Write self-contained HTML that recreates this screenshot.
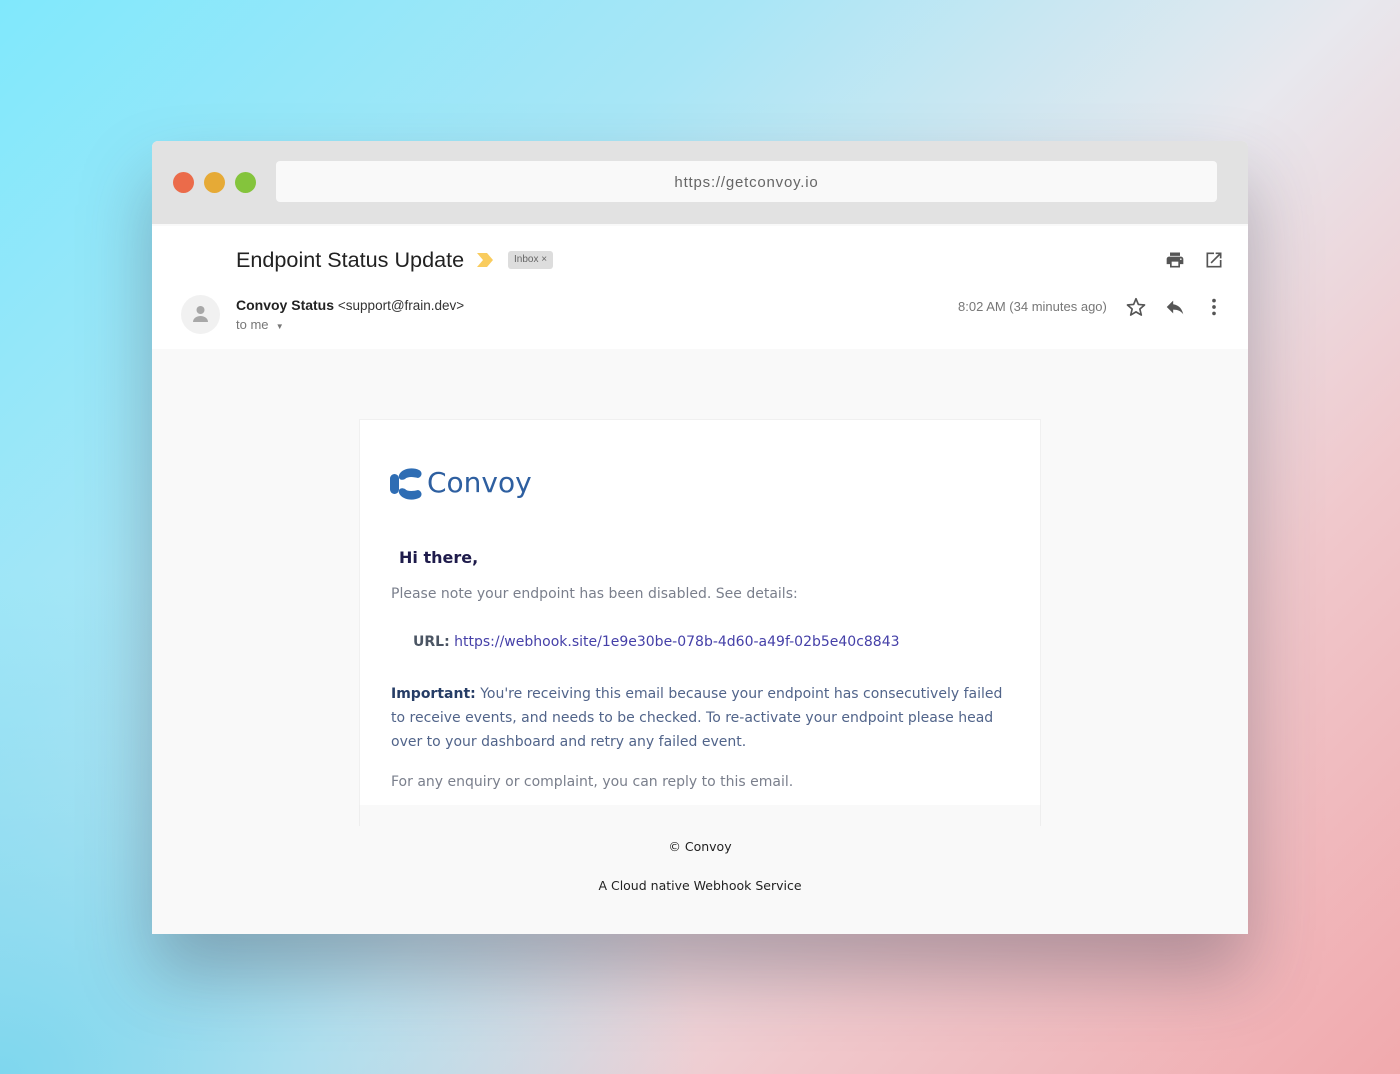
<!DOCTYPE html>
<html><head><meta charset="utf-8"><style>
*{margin:0;padding:0;box-sizing:border-box}
body{width:1400px;height:1074px;overflow:hidden;position:relative;font-family:"Liberation Sans",sans-serif;
background:radial-gradient(ellipse 700px 500px at 0% 100%,rgba(122,214,238,.95),rgba(122,214,238,0) 100%),linear-gradient(135deg,#80e8fc 0%,#a8e6f6 30%,#e8e8ee 55%,#f0c8cc 75%,#f1a9ad 100%);}
.win{position:absolute;left:152px;top:141px;width:1096px;height:793px;background:#f9f9f9;border-radius:6px 6px 0 0;overflow:hidden;box-shadow:0 40px 70px rgba(60,60,80,.35)}
.tb{position:absolute;left:0;top:0;width:1096px;height:83px;background:#e2e2e2}
.dot{position:absolute;top:31px;width:21px;height:21px;border-radius:50%}
.url{position:absolute;left:124px;top:20px;width:941px;height:41px;background:#f9f9f9;border-radius:4px;text-align:center;line-height:43px;font-size:15px;color:#666;letter-spacing:.8px}
.hdr{position:absolute;left:0;top:85px;width:1096px;height:123px;background:#fff}
.t{position:absolute;white-space:nowrap}
.card{position:absolute;left:207px;top:278px;width:682px;height:386px;background:#fff;border:1px solid #f0f0f0;border-bottom:none}
.cb{position:absolute;left:207px;top:664px;width:682px;height:21px;border-left:1px solid #eee;border-right:1px solid #eee}
.q{font-family:"DejaVu Sans","Liberation Sans",sans-serif}
</style></head><body>
<div class="win">
 <div class="tb">
  <div class="dot" style="left:21px;background:#eb6b4a"></div>
  <div class="dot" style="left:52px;background:#e6aa36"></div>
  <div class="dot" style="left:83px;background:#84c43c"></div>
  <div class="url">https://getconvoy.io</div>
 </div>
 <div class="hdr">
  <div class="t" style="left:84px;top:21px;font-size:21.6px;color:#222">Endpoint Status Update</div>
  <svg class="t" style="left:324px;top:26px" width="18" height="16" viewBox="0 0 18 16"><path d="M1 1h10l6 7-6 7H1l6-7z" fill="#f9cc5e"/></svg>
  <div class="t" style="left:356px;top:25px;height:18px;padding:0 6px;background:#ddd;border-radius:3px;font-size:10px;line-height:18px;color:#666">Inbox ×</div>
  <div class="t" style="left:29px;top:69px;width:39px;height:39px;border-radius:50%;background:#f1f1f1"></div>
  <svg class="t" style="left:39px;top:78px" width="19" height="20" viewBox="0 0 19 20"><circle cx="9.5" cy="6" r="4" fill="#a8a8a8"/><path d="M2 18c0-4 4-6 7.5-6s7.5 2 7.5 6z" fill="#a8a8a8"/></svg>
  <div class="t" style="left:84px;top:71px;font-size:14px;color:#222"><b>Convoy Status</b> <span style="font-size:13.5px;color:#333">&lt;support@frain.dev&gt;</span></div>
  <div class="t" style="left:84px;top:91px;font-size:13px;color:#777">to me &nbsp;<span style="font-size:8px">▼</span></div>
  <div class="t" style="left:806px;top:73px;font-size:13px;color:#777">8:02 AM (34 minutes ago)</div>
  <svg class="t" style="left:1013px;top:24px" width="20" height="20" viewBox="0 0 24 24"><path d="M19 8H5c-1.7 0-3 1.3-3 3v6h4v4h12v-4h4v-6c0-1.7-1.3-3-3-3zm-3 11H8v-5h8v5zm3-7a1 1 0 110-2 1 1 0 010 2zM18 3H6v4h12z" fill="#555"/></svg>
  <svg class="t" style="left:1052px;top:24px" width="20" height="20" viewBox="0 0 24 24"><path d="M19 19H5V5h7V3H3v18h18v-9h-2zM14 3v2h3.6l-9.8 9.8 1.4 1.4L19 6.4V10h2V3z" fill="#555"/></svg>
  <svg class="t" style="left:973px;top:70px" width="22" height="22" viewBox="0 0 24 24"><path d="M12 3l2.6 6.2 6.7.6-5.1 4.4 1.6 6.6L12 17.3l-5.8 3.5 1.6-6.6-5.1-4.4 6.7-.6z" fill="none" stroke="#555" stroke-width="1.8" stroke-linejoin="round"/></svg>
  <svg class="t" style="left:1012px;top:70px" width="22" height="22" viewBox="0 0 24 24"><path d="M10 9V5l-7 7 7 7v-4.1c5 0 8.5 1.6 11 5.1-1-5-4-10-11-11z" fill="#555"/></svg>
  <svg class="t" style="left:1051px;top:70px" width="22" height="22" viewBox="0 0 24 24"><circle cx="12" cy="5" r="2" fill="#555"/><circle cx="12" cy="12" r="2" fill="#555"/><circle cx="12" cy="19" r="2" fill="#555"/></svg>
 </div>
 <div class="card">
  <svg class="t" style="left:30px;top:47px" width="34" height="34" viewBox="0 0 34 34"><rect x="0" y="7" width="9" height="20" rx="4.5" fill="#2e6db4"/><path d="M9 8 C12 1 23 0 29 3 C33 5 32 10 28 11 C24 10 18 9 15 12 C11 14 8 12 9 8z" fill="#2e6db4"/><path d="M9 26 C12 33 23 34 29 31 C33 29 32 24 28 23 C24 24 18 25 15 22 C11 20 8 22 9 26z" fill="#2e6db4"/></svg>
  <div class="t q" style="left:67px;top:46px;font-size:28px;color:#2e5fa0">Convoy</div>
  <div class="t q" style="left:39px;top:128px;font-size:16px;font-weight:bold;color:#1e1b4b">Hi there,</div>
  <div class="t q" style="left:31px;top:166px;font-size:14px;color:#7a7f8c">Please note your endpoint has been disabled. See details:</div>
  <div class="t q" style="left:53px;top:214px;font-size:14px;color:#4b5563"><b>URL:</b> <span style="color:#4540a8">https://webhook.site/1e9e30be-078b-4d60-a49f-02b5e40c8843</span></div>
  <div class="t q" style="left:31px;top:262px;font-size:14px;line-height:24px;color:#51648a;white-space:normal;width:615px"><b style="color:#263d66">Important:</b> You're receiving this email because your endpoint has consecutively failed to receive events, and needs to be checked. To re-activate your endpoint please head over to your dashboard and retry any failed event.</div>
  <div class="t q" style="left:31px;top:354px;font-size:14px;color:#7a7f8c">For any enquiry or complaint, you can reply to this email.</div>
 </div>
 <div class="cb"></div>
 <div class="t q" style="left:0;width:1096px;text-align:center;top:698px;font-size:12.5px;color:#222">© Convoy</div>
 <div class="t q" style="left:0;width:1096px;text-align:center;top:737px;font-size:12.5px;color:#222">A Cloud native Webhook Service</div>
</div>
</body></html>
